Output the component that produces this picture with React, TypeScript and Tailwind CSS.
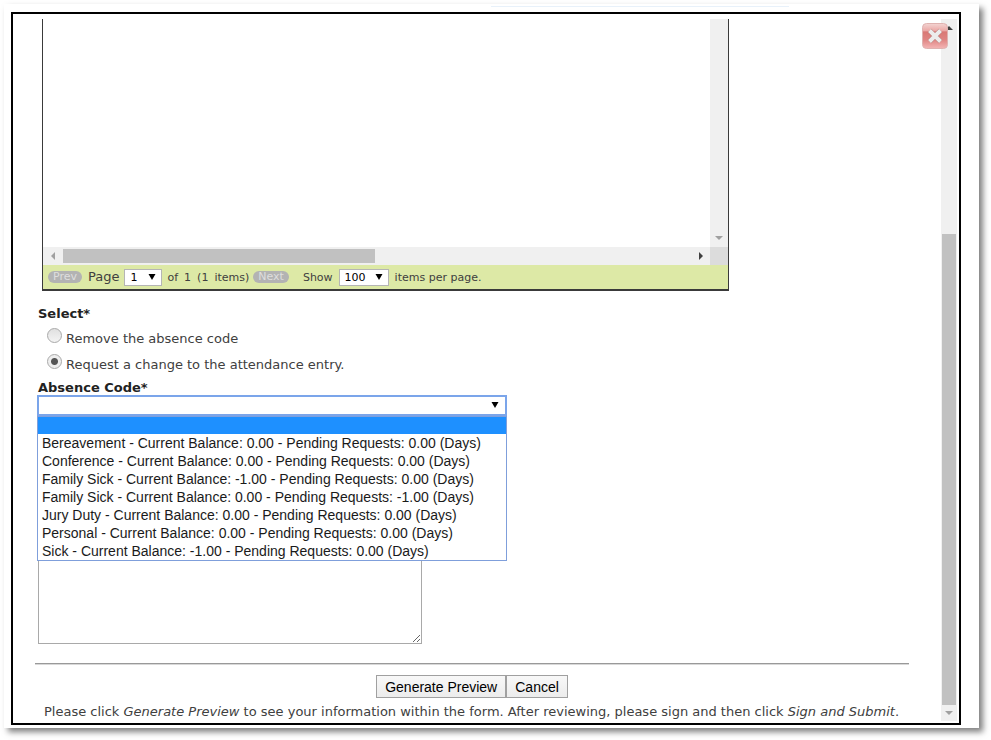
import { useState } from 'react';

const absenceCodes = [
  'Bereavement - Current Balance: 0.00 - Pending Requests: 0.00 (Days)',
  'Conference - Current Balance: 0.00 - Pending Requests: 0.00 (Days)',
  'Family Sick - Current Balance: -1.00 - Pending Requests: 0.00 (Days)',
  'Family Sick - Current Balance: 0.00 - Pending Requests: -1.00 (Days)',
  'Jury Duty - Current Balance: 0.00 - Pending Requests: 0.00 (Days)',
  'Personal - Current Balance: 0.00 - Pending Requests: 0.00 (Days)',
  'Sick - Current Balance: -1.00 - Pending Requests: 0.00 (Days)',
];

const radioClass =
  'mt-[3px] h-[15px] w-[15px] shrink-0 appearance-none rounded-full border border-[#a9a9a9] bg-linear-to-b from-[#e0e0e0] to-[#f4f4f4] checked:bg-[radial-gradient(circle,#555_0_3px,#eee_4px)]';

const pagerButtonClass =
  'h-3 rounded-full bg-[#b3b3b3] px-[5px] text-[11px] leading-3 text-[#dedede]';

const formButtonClass =
  "h-[23px] border border-[#a0a0a0] bg-linear-to-b from-[#f8f8f8] to-[#ececec] px-2 font-['Liberation_Sans',Arial,sans-serif] text-[14px] leading-5 text-black";

function Arrow({ points, className }: { points: string; className: string }) {
  return (
    <svg viewBox="0 0 8 8" className={`h-2 w-2 shrink-0 ${className}`} aria-hidden="true">
      <polygon points={points} fill="currentColor" />
    </svg>
  );
}

function PagerSelect({ label, value, width }: { label: string; value: string; width: string }) {
  return (
    <span className={`relative block ${width}`}>
      <select
        aria-label={label}
        defaultValue={value}
        className="block h-[17px] w-full appearance-none border border-[#b5b5b5] bg-white pl-[5px] text-[11px] leading-[15px] text-black"
      >
        <option>{value}</option>
      </select>
      <Arrow points="0.5,1 7.5,1 4,7" className="pointer-events-none absolute right-[6px] top-1 text-black" />
    </span>
  );
}

function AbsenceGrid() {
  return (
    <section className="ml-[29px] w-[687px] max-w-full border-x border-b-2 border-[#3a3a3a]">
      <div className="flex h-[228px]">
        <div className="flex-1" />
        <div className="flex w-[18px] flex-col items-center justify-end bg-[#f0f0f0] pb-[5px]">
          <Arrow points="0,2 8,2 4,6" className="text-[#a0a0a0]" />
        </div>
      </div>
      <div className="flex h-[18px] bg-[#f0f0f0]">
        <div className="flex flex-1 items-center pl-[6px] pr-[5px]">
          <Arrow points="6,0 6,8 2,4" className="text-[#a0a0a0]" />
          <div className="ml-[6px] h-[14px] w-[312px] bg-[#c1c1c1]" />
          <Arrow points="2,0 2,8 6,4" className="ml-auto text-[#404040]" />
        </div>
        <div className="w-[18px] bg-[#dcdcdc]" />
      </div>
      <div className="flex h-6 items-center bg-[#dde9a6] pl-[5px] text-[11px] text-[#404040]">
        <button className={pagerButtonClass}>Prev</button>
        <span className="ml-[6px] text-[13px]">Page</span>
        <span className="ml-[5px]">
          <PagerSelect label="Page" value="1" width="w-[38px]" />
        </span>
        <span className="ml-[5px] flex gap-[6px] pt-0.5">
          <span>of</span>
          <span>1</span>
          <span>(1</span>
          <span>items)</span>
        </span>
        <button className={`ml-1 ${pagerButtonClass}`}>Next</button>
        <span className="ml-[14px] pt-0.5">Show</span>
        <span className="ml-[6px]">
          <PagerSelect label="Items per page" value="100" width="w-[50px]" />
        </span>
        <span className="ml-[6px] pt-0.5">items per page.</span>
      </div>
    </section>
  );
}

function AbsenceCodeSelect() {
  return (
    <div className="relative -ml-px w-[470px] max-w-full">
      <select
        id="absence-code"
        defaultValue=""
        className="block h-[21px] w-full appearance-none border-2 border-[#7ba5ea] bg-white outline-none"
      >
        <option value="" />
        {absenceCodes.map((code) => (
          <option key={code}>{code}</option>
        ))}
      </select>
      <Arrow points="0.5,1 7.5,1 4,7" className="pointer-events-none absolute right-2 top-[6px] text-black" />
      {/* Open list */}
      <ul
        role="listbox"
        aria-label="Absence Code"
        className="absolute inset-x-0 top-[21px] z-10 border border-[#7f9fdb] bg-white font-['Liberation_Sans',Arial,sans-serif] text-[14px] leading-[18px] text-[#1a1a1a]"
      >
        <li role="option" aria-selected="true" className="h-[17px] bg-[#1e90ff]" />
        {absenceCodes.map((code) => (
          <li key={code} role="option" aria-selected="false" className="whitespace-nowrap pl-1">
            {code}
          </li>
        ))}
      </ul>
    </div>
  );
}

function CloseButton() {
  return (
    <button aria-label="Close" className="absolute right-[11px] top-[9px] z-10 h-[26px] w-[26px]">
      <svg viewBox="0 0 26 26" className="h-full w-full">
        <defs>
          <linearGradient id="closeFill" x1="0" y1="0" x2="0" y2="1">
            <stop offset="0" stopColor="#f3d5d3" />
            <stop offset="0.28" stopColor="#eba9a7" />
            <stop offset="0.34" stopColor="#d97875" />
            <stop offset="0.65" stopColor="#df8583" />
            <stop offset="1" stopColor="#f4b5b5" />
          </linearGradient>
        </defs>
        <rect x="0.5" y="0.5" width="25" height="25" rx="4" fill="url(#closeFill)" stroke="#dfb2b0" />
        <path d="M7.5 7.5L18.5 18.5M18.5 7.5L7.5 18.5" stroke="#b87876" strokeWidth="5" />
        <path d="M7.5 7.5L18.5 18.5M18.5 7.5L7.5 18.5" stroke="#ececec" strokeWidth="4" />
      </svg>
    </button>
  );
}

export default function App() {
  const [action, setAction] = useState('change');

  return (
    <div className="bg-white pb-3 pl-1 pr-3 pt-1 font-['DejaVu_Sans',Verdana,sans-serif] text-[13px] text-[#404040]">
      <div className="bg-white pb-[3px] pl-[7px] pr-[18px] shadow-[4px_4px_6px_rgba(0,0,0,0.5)]">
        <div className="flex h-2 justify-end pr-[172px] pt-[2px]">
          <div className="h-px w-[298px] bg-[#e8f1fa]" />
        </div>
        <div className="relative flex border-2 border-black pb-[2px] pr-[2px] pt-[5px]">
          <main className="min-w-0 flex-1">
            <AbsenceGrid />

            <form className="pl-[25px]" onSubmit={(e) => e.preventDefault()}>
              <fieldset className="pt-[14px]">
                <legend className="contents">
                  <span className="block h-5 font-bold leading-[18px] text-[#222]">Select*</span>
                </legend>
                <label className="flex h-[26px] pl-[9px] leading-7">
                  <input
                    type="radio"
                    name="action"
                    className={radioClass}
                    checked={action === 'remove'}
                    onChange={() => setAction('remove')}
                  />
                  <span className="ml-1">Remove the absence code</span>
                </label>
                <label className="flex h-[26px] pl-[9px] leading-7">
                  <input
                    type="radio"
                    name="action"
                    className={radioClass}
                    checked={action === 'change'}
                    onChange={() => setAction('change')}
                  />
                  <span className="ml-1">Request a change to the attendance entry.</span>
                </label>
              </fieldset>

              <label htmlFor="absence-code" className="block h-[18px] font-bold leading-[22px] text-[#222]">
                Absence Code*
              </label>
              <AbsenceCodeSelect />

              <textarea
                aria-label="Comments"
                className="mt-6 block h-[204px] w-[384px] max-w-full resize border border-[#a9a9a9] bg-white"
              />
            </form>

            <hr className="ml-[22px] mr-8 mt-[19px] h-0.5 border-b border-t border-b-[#d8d8d8] border-t-[#999]" />
            <div className="mt-[10px] flex justify-center pr-[10px]">
              <button className={formButtonClass}>Generate Preview</button>
              <button className={formButtonClass}>Cancel</button>
            </div>
            <p className="ml-[31px] mt-[5px] whitespace-nowrap leading-[18px]">
              Please click <em>Generate Preview</em> to see your information within the form. After reviewing, please
              sign and then click <em>Sign and Submit</em>.
            </p>
          </main>

          {/* Page scrollbar */}
          <div className="flex w-4 flex-col items-center bg-[#f0f0f0]">
            <Arrow points="0,6 8,6 4,2" className="mt-[5px] text-[#404040]" />
            <div className="mt-[202px] w-[14px] flex-1 bg-[#c1c1c1]" />
            <Arrow points="0,2 8,2 4,6" className="my-1 text-[#a0a0a0]" />
          </div>
          <CloseButton />
        </div>
      </div>
    </div>
  );
}
